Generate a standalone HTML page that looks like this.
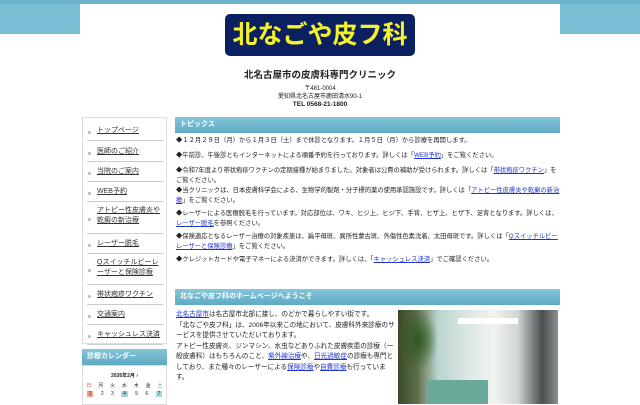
<!DOCTYPE html>
<html><head><meta charset="utf-8"><style>
*{margin:0;padding:0;box-sizing:border-box}
body{width:640px;height:400px;overflow:hidden;background:#fff;font-family:"Liberation Sans","Noto Sans CJK JP",sans-serif;color:#222;position:relative}
.band{position:absolute;left:0;top:0;width:640px;height:34px;background:#7cbfd5;border-top:4px solid #6cb2ca}
.wrap{position:absolute;left:80px;top:4px;width:480px;height:396px;background:#fff}
.logo{position:absolute;left:145px;top:10px;width:190px;height:42px;background:#0b2060;border-radius:5px;color:#f5f22a;font-weight:bold;font-size:25px;line-height:42px;text-align:center;white-space:nowrap}
.t{position:absolute;left:0;width:480px;text-align:center;font-weight:bold;white-space:nowrap}
.side{position:absolute;left:2px;top:113px;width:85px;height:227px;border:1px solid #ddd;background:#fff}
.side div{position:absolute;left:4px;width:76px;border-bottom:1px solid #ccc;font-size:7px;line-height:10px;padding-left:10px;text-decoration:underline;color:#333}
.side div:before{content:"";position:absolute;left:1px;top:50%;width:3px;height:3px;background:#bbb;border-radius:50%}
.hd{position:absolute;background:linear-gradient(#85c6da,#5eaac4);color:#fff;font-weight:bold;font-size:7px;line-height:16px;padding-left:5px}
.main p{position:absolute;left:96px;width:385px;font-size:6.3px;line-height:10px;color:#222}
a{color:#2233cc;text-decoration:underline}
.w{position:absolute;left:96px;top:306px;width:222px;font-size:6.6px;line-height:10.5px}
</style></head><body>
<div class="band"></div>
<div class="wrap">
<div class="logo">北なごや皮フ科</div>
<div class="t" style="top:63px;font-size:9.5px">北名古屋市の皮膚科専門クリニック</div>
<div class="t" style="top:79px;font-size:6px;font-weight:normal">〒481-0004</div>
<div class="t" style="top:87px;font-size:6px;font-weight:normal">愛知県北名古屋市鹿田清水90-1</div>
<div class="t" style="top:97px;font-size:6.5px">TEL 0568-21-1800</div>
<div class="side">
<div style="top:4px;height:19px;padding-top:4px">トップページ</div>
<div style="top:24px;height:20px;padding-top:5px">医師のご紹介</div>
<div style="top:44px;height:20px;padding-top:5px">当院のご案内</div>
<div style="top:64px;height:20px;padding-top:5px">WEB予約</div>
<div style="top:84px;height:32px;padding-top:4px">アトピー性皮膚炎や乾癬の新治療</div>
<div style="top:116px;height:20px;padding-top:5px">レーザー脱毛</div>
<div style="top:136px;height:31px;padding-top:4px">Qスイッチルビーレーザーと保険診療</div>
<div style="top:167px;height:20px;padding-top:5px">帯状疱疹ワクチン</div>
<div style="top:187px;height:20px;padding-top:5px">交通案内</div>
<div style="top:207px;height:20px;padding-top:5px">キャッシュレス決済</div>
</div>
<div class="hd" style="left:2px;top:345px;width:85px">診療カレンダー</div>
<div style="position:absolute;left:2px;top:361px;width:85px;height:40px;border:1px solid #ddd;font-size:5px">
<div style="text-align:center;font-weight:bold;margin-top:6px">2026年2月 ›</div>
<div style="display:flex;justify-content:space-around;margin-top:3px"><span style="color:#d44">日</span><span>月</span><span>火</span><span>水</span><span>木</span><span>金</span><span style="color:#38a">土</span></div>
<div style="display:flex;justify-content:space-around;margin-top:2px"><span style="background:#f2a080;padding:0 2px">1</span><span>2</span><span>3</span><span style="background:#a8d4e4;padding:0 2px">4</span><span>5</span><span>6</span><span style="background:#a8d4e4;padding:0 2px">7</span></div>
</div>
<div class="main">
<div class="hd" style="left:95px;top:113px;width:385px">トピックス</div>
<p style="top:132px">◆１２月２９日（月）から１月３日（土）まで休診となります。１月５日（月）から診療を再開します。</p>
<p style="top:147px">◆午前診、午後診ともインターネットによる順番予約を行っております。詳しくは「<a>WEB予約</a>」をご覧ください。</p>
<p style="top:162px">◆令和7年度より帯状疱疹ワクチンの定期接種が始まりました。対象者は公費の補助が受けられます。詳しくは「<a>帯状疱疹ワクチン</a>」をご覧ください。</p>
<p style="top:182px">◆当クリニックは、日本皮膚科学会による、生物学的製剤・分子標的薬の使用承認施設です。詳しくは「<a>アトピー性皮膚炎や乾癬の新治療</a>」をご覧ください。</p>
<p style="top:205px">◆レーザーによる医療脱毛を行っています。対応部位は、ワキ、ヒジ上、ヒジ下、手背、ヒザ上、ヒザ下、足背となります。詳しくは、<a>レーザー脱毛</a>を参照ください。</p>
<p style="top:228px">◆保険適応となるレーザー治療の対象疾患は、扁平母斑、異所性蒙古斑、外傷性色素沈着、太田母斑です。詳しくは「<a>Qスイッチルビーレーザーと保険診療</a>」をご覧ください。</p>
<p style="top:251px">◆クレジットカードや電子マネーによる決済ができます。詳しくは、「<a>キャッシュレス決済</a>」でご確認ください。</p>
<div class="hd" style="left:95px;top:285px;width:385px">北なごや皮フ科のホームページへようこそ</div>
<div class="w"><a>北名古屋市</a>は名古屋市北部に接し、のどかで暮らしやすい街です。<br>「北なごや皮フ科」は、2006年以来この地において、皮膚科外来診療のサービスを提供させていただいております。<br>アトピー性皮膚炎、ジンマシン、水虫などありふれた皮膚疾患の診療（一般皮膚科）はもちろんのこと、<a>紫外線治療</a>や、<a>日光過敏症</a>の診療も専門としており、また種々のレーザーによる<a>保険診療</a>や<a>自費診療</a>も行っています。</div>
<div style="position:absolute;left:318px;top:306px;width:160px;height:94px;background:linear-gradient(90deg,#3a4a2a 0,#5d6e48 12%,#b9d4d0 25%,#dfe8e6 45%,#f1f3ef 60%,#cfd6d4 75%,#4a4e50 90%,#8a8e8e 100%)">
<div style="position:absolute;left:60px;top:8px;width:60px;height:6px;background:#fff"></div>
<div style="position:absolute;left:30px;top:70px;width:60px;height:24px;background:#6aa89a"></div>
<div style="position:absolute;left:0;top:0;width:40px;height:60px;background:radial-gradient(#2f5a24,transparent 70%)"></div>
</div>
</div>
</div>
</body></html>
